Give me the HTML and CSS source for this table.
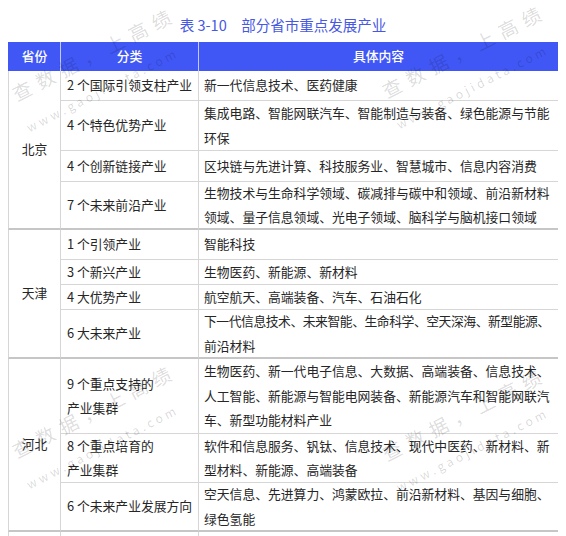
FILE: index.html
```html
<!DOCTYPE html>
<html lang="zh-CN">
<head>
<meta charset="utf-8">
<title>部分省市重点发展产业</title>
<link rel="stylesheet" href="styles.css">
</head>
<body>
<h1 class="title">表 3-10　部分省市重点发展产业</h1>
<div class="tbl">
  <div class="th th-first">省份</div>
  <div class="th">分类</div>
  <div class="th th-last">具体内容</div>

  <div class="prov span4 end">北京</div>
  <div class="c2">2 个国际引领支柱产业</div>
  <div class="c3">新一代信息技术、医药健康</div>
  <div class="c2">4 个特色优势产业</div>
  <div class="c3">集成电路、智能网联汽车、智能制造与装备、绿色能源与节能环保</div>
  <div class="c2">4 个创新链接产业</div>
  <div class="c3">区块链与先进计算、科技服务业、智慧城市、信息内容消费</div>
  <div class="c2 end">7 个未来前沿产业</div>
  <div class="c3 end">生物技术与生命科学领域、碳减排与碳中和领域、前沿新材料领域、量子信息领域、光电子领域、脑科学与脑机接口领域</div>

  <div class="prov span4 end">天津</div>
  <div class="c2">1 个引领产业</div>
  <div class="c3">智能科技</div>
  <div class="c2">3 个新兴产业</div>
  <div class="c3">生物医药、新能源、新材料</div>
  <div class="c2">4 大优势产业</div>
  <div class="c3">航空航天、高端装备、汽车、石油石化</div>
  <div class="c2 end">6 大未来产业</div>
  <div class="c3 end"><span><span class="tight">下一代信息技术、未来智能、生命科学、空天深海、新型能源、</span><br>前沿材料</span></div>

  <div class="prov span3 end">河北</div>
  <div class="c2"><span>9 个重点支持的<br>产业集群</span></div>
  <div class="c3">生物医药、新一代电子信息、大数据、高端装备、信息技术、人工智能、新能源与智能电网装备、新能源汽车和智能网联汽车、新型功能材料产业</div>
  <div class="c2"><span>8 个重点培育的<br>产业集群</span></div>
  <div class="c3">软件和信息服务、钒钛、信息技术、现代中医药、新材料、新型材料、新能源、高端装备</div>
  <div class="c2 end">6 个未来产业发展方向</div>
  <div class="c3 end">空天信息、先进算力、鸿蒙欧拉、前沿新材料、基因与细胞、绿色氢能</div>

  <div class="prov"></div>
  <div class="c2"></div>
  <div class="c3"></div>
</div>

<div class="wm wm-a"><div class="wm-main">查数据，上高绩</div><div class="wm-url">www.gaojidata.com</div></div>
<div class="wm wm-b"><div class="wm-main">查数据，上高绩</div><div class="wm-url">www.gaojidata.com</div></div>
<div class="wm wm-c"><div class="wm-main">查数据，上高绩</div><div class="wm-url">www.gaojidata.com</div></div>
<div class="wm wm-d"><div class="wm-main">查数据，上高绩</div><div class="wm-url">www.gaojidata.com</div></div>
</body>
</html>
```

FILE: styles.css
```css
html, body {
  overflow: hidden;
}

body {
  margin: 8px;
  background: #ffffff;
  color: #262626;
  font-family: "Noto Sans CJK SC", "Noto Sans", sans-serif;
}

.title {
  margin: 0;
  height: 34px;
  line-height: 34px;
  text-align: center;
  font-size: 14.5px;
  font-weight: 400;
  color: #4658e4;
}

.tbl {
  display: grid;
  grid-template-columns: 53px 138px 360px;
  grid-template-rows: 29px 30px 50px 31px 48px 30px 25px 25px 49px 75px 49px 49px 40px;
  font-size: 12.8px;
  line-height: 24.5px;
}

.tbl > div {
  box-sizing: border-box;
  display: flex;
  align-items: center;
  border-right: 1px solid #d6d6d6;
  border-bottom: 1px solid #d6d6d6;
  padding: 0 5px;
}

.tbl > .th {
  background: #4057f5;
  color: #ffffff;
  justify-content: center;
  font-weight: 500;
  border-bottom: 0;
  border-right-color: #c3c9f6;
}

.tbl > .th-first {
  border-left: 1px solid #4057f5;
}

.tbl > .th-last {
  border-right-color: #4057f5;
}

.tbl > .prov {
  justify-content: center;
  border-left: 1px solid #d6d6d6;
}

.span4 {
  grid-row: span 4;
}

.span3 {
  grid-row: span 3;
}

.tbl > .c2 {
  padding-left: 6px;
  white-space: nowrap;
}

.tbl > .end {
  border-bottom: 2px solid #c6c6c6;
}

.tight {
  letter-spacing: -0.45px;
}

/* watermarks */
.wm {
  position: absolute;
  transform-origin: 0 0;
  transform: rotate(-27deg);
  pointer-events: none;
  white-space: nowrap;
  font-family: "Noto Sans CJK SC", "Noto Sans", sans-serif;
}

.wm-main {
  font-size: 19px;
  line-height: 24px;
  letter-spacing: 7px;
  color: rgba(0, 0, 0, 0.15);
}

.wm-url {
  margin-top: 16px;
  margin-left: -3px;
  font-size: 12px;
  line-height: 15px;
  letter-spacing: 3.4px;
  color: rgba(0, 0, 0, 0.16);
}

.wm-a { left: 8px;   top: 83.6px; }
.wm-b { left: 378px; top: 80.6px; }
.wm-c { left: 8px;   top: 440.6px; }
.wm-d { left: 378px; top: 443.6px; }
```
